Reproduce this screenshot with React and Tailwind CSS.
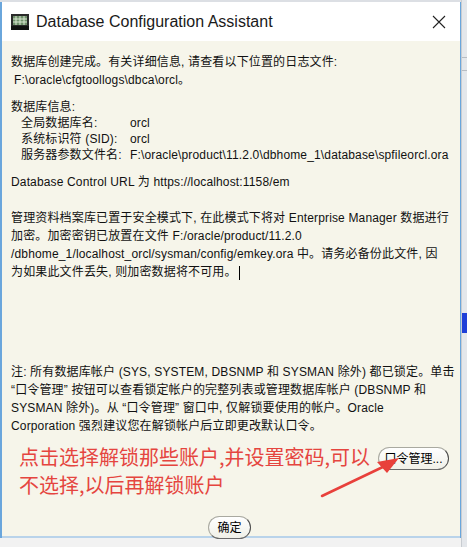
import React from 'react';

const font = { fontFamily: '"Liberation Sans", "Noto Sans CJK SC", sans-serif' };

function AppIcon() {
  return (
    <svg width="20" height="18" viewBox="0 0 20 18">
      <rect x="1" y="1" width="18" height="16" fill="#2a2a2a" />
      <rect x="3" y="3" width="14" height="9" fill="#6f8f6a" />
      <path d="M3 6h14M3 9h14M6 3v9M10 3v9M14 3v9" stroke="#d8e6d0" strokeWidth="1" />
      <rect x="1" y="13" width="18" height="4" fill="#111" />
    </svg>
  );
}

function PillButton({ children, className = '' }) {
  return (
    <button
      className={`h-[23px] rounded-full border border-[#a9a9a0] border-r-[#4a4a4a] border-b-[#6a6a6a] bg-gradient-to-b from-white to-[#f0f0e8] text-[12px] text-black leading-none ${className}`}
    >
      {children}
    </button>
  );
}

export default function App() {
  return (
    <div className="flex w-[467px] h-[547px] overflow-hidden bg-[#dfe3e8]" style={font}>
      {/* dialog window */}
      <div className="flex flex-col w-[461px] h-[547px]">
        <div className="h-[2px] bg-[#dcdfe4]" />
        <div className="flex flex-col flex-1 border-l-2 border-r border-[#6aa6dc]">
          {/* title bar */}
          <div className="flex items-center h-[39px] bg-white pl-[8px] pr-[14px]">
            <AppIcon />
            <span className="ml-[6px] text-[16px] text-[#1a1a1a]">Database Configuration Assistant</span>
            <svg className="ml-auto" width="14" height="14" viewBox="0 0 14 14">
              <path d="M1 1L13 13M13 1L1 13" stroke="#222" strokeWidth="1.1" />
            </svg>
          </div>

          {/* content */}
          <div className="relative flex flex-col h-[495px] bg-[#f6f5ea] pl-[9px] text-[12px] tracking-[0.15px] text-[#111]">
            <div className="pt-[12px] leading-[18px]">
              <div>数据库创建完成。有关详细信息, 请查看以下位置的日志文件:</div>
              <div className="pl-[3px]">F:\oracle\cfgtoollogs\dbca\orcl。</div>
            </div>

            <div className="mt-[10px] leading-[16px]">
              <div>数据库信息:</div>
              <div className="flex pl-[10px]">
                <span className="w-[109px]">全局数据库名:</span>
                <span>orcl</span>
              </div>
              <div className="flex pl-[10px]">
                <span className="w-[109px]">系统标识符 (SID):</span>
                <span>orcl</span>
              </div>
              <div className="flex pl-[10px] whitespace-nowrap">
                <span className="w-[109px]">服务器参数文件名:</span>
                <span>F:\oracle\product\11.2.0\dbhome_1\database\spfileorcl.ora</span>
              </div>
            </div>

            <div className="mt-[10px] leading-[18px]">Database Control URL 为 https://localhost:1158/em</div>

            <div className="mt-[18px] leading-[18px] whitespace-nowrap">
              <div>管理资料档案库已置于安全模式下, 在此模式下将对 Enterprise Manager 数据进行</div>
              <div>加密。加密密钥已放置在文件 F:/oracle/product/11.2.0</div>
              <div>/dbhome_1/localhost_orcl/sysman/config/emkey.ora 中。请务必备份此文件, 因</div>
              <div>
                为如果此文件丢失, 则加密数据将不可用。
                <span className="inline-block w-px h-[14px] bg-black align-middle ml-[2px]" />
              </div>
            </div>

            <div className="mt-[82px] leading-[18px] whitespace-nowrap">
              <div>注: 所有数据库帐户 (SYS, SYSTEM, DBSNMP 和 SYSMAN 除外) 都已锁定。单击</div>
              <div>“口令管理” 按钮可以查看锁定帐户的完整列表或管理数据库帐户 (DBSNMP 和</div>
              <div>SYSMAN 除外)。从 “口令管理” 窗口中, 仅解锁要使用的帐户。Oracle</div>
              <div>Corporation 强烈建议您在解锁帐户后立即更改默认口令。</div>
            </div>

            <div className="mt-[8px] flex items-start">
              <div className="pl-[8px] text-[20px] leading-[28px] tracking-normal text-[#e5453f] whitespace-nowrap" style={{ fontFamily: '"Noto Sans CJK SC", sans-serif' }}>
                <div>点击选择解锁那些账户,并设置密码,可以</div>
                <div>不选择,以后再解锁账户</div>
              </div>
              <PillButton className="ml-auto mr-[11px] mt-[4px] w-[71px] tracking-normal">口令管理...</PillButton>
            </div>

            <div className="mt-[17px] flex justify-center pr-[12px]">
              <PillButton className="w-[43px] tracking-normal">确定</PillButton>
            </div>

            {/* red annotation arrow */}
            <svg className="absolute left-[315px] top-[412px]" width="90" height="50" viewBox="0 0 90 50">
              <path d="M5 43L70 12" stroke="#e8403b" strokeWidth="2.5" strokeLinecap="round" />
              <path d="M82 5L60 9L70 20Z" fill="#e8403b" />
            </svg>
          </div>
          <div className="h-[2px] bg-[#b9d3ea]" />
        </div>
        <div className="h-[9px] bg-[#f2f2f2]" />
      </div>

      {/* background strip on the right */}
      <div className="relative flex-1 bg-[#e4e7eb] border-l border-[#c8ccd1]">
        <div className="absolute left-0 right-0 top-[57px] h-px bg-[#b8bcc2]" />
        <div className="absolute left-0 right-0 top-[70px] h-px bg-[#b8bcc2]" />
        <div className="absolute left-0 right-0 top-[313px] h-[20px] bg-[#1f3fd8]" />
      </div>
    </div>
  );
}
